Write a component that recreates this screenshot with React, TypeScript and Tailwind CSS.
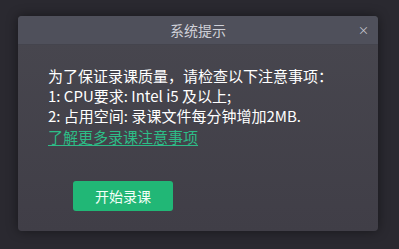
import React from 'react';

const App: React.FC = () => {
  return (
    <div
      className="w-[399px] h-[249px] bg-[#2a2930] pt-[16px] pl-[18px]"
      style={{ fontFamily: '"Microsoft YaHei", "Noto Sans CJK SC", "Noto Sans", sans-serif' }}
    >
      <div className="w-[360px] h-[215px] rounded-[4px] overflow-hidden bg-gradient-to-b from-[#48474f] to-[#403e47] shadow-[0_0_12px_rgba(0,0,0,0.45)] flex flex-col">
        <div className="h-[29px] bg-[#4f505b] border-b border-[#44444d] flex items-center justify-center relative">
          <span className="text-[14px] text-[#cfd0d8] leading-none">系统提示</span>
          <span className="absolute right-[9px] top-[9px] text-[11px] leading-none text-[#c8c8d2]">×</span>
        </div>
        <div className="pl-[30px] pt-[21px] text-[15px] leading-[20px] text-white">
          <p>为了保证录课质量，请检查以下注意事项：</p>
          <p>1: CPU要求: Intel i5 及以上;</p>
          <p>2: 占用空间: 录课文件每分钟增加2MB.</p>
          <a className="mt-[2px] text-[#2dbd87] underline underline-offset-2 leading-[18px] block w-fit">了解更多录课注意事项</a>
        </div>
        <div className="pl-[55px] pt-[35px]">
          <button className="w-[100px] h-[30px] rounded-[3px] bg-[#21b776] text-[#f2fff8] text-[14px] leading-none">
            开始录课
          </button>
        </div>
      </div>
    </div>
  );
};

export default App;
